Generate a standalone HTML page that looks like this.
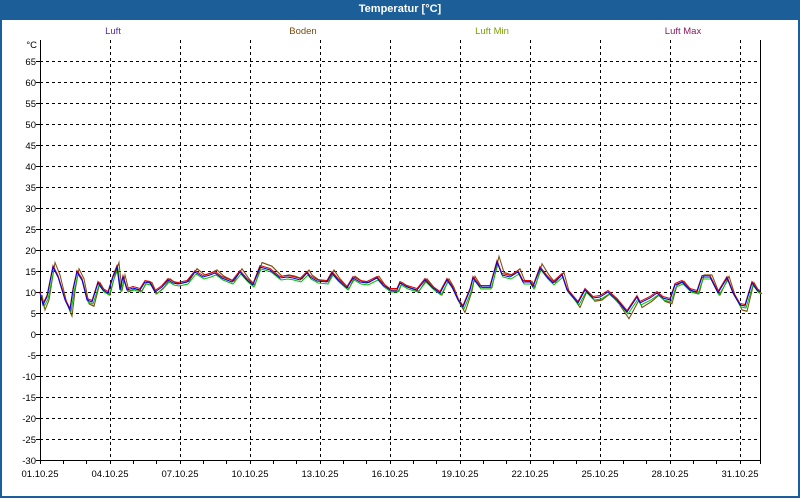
<!DOCTYPE html>
<html><head><meta charset="utf-8"><style>
body{margin:0;width:800px;height:500px;overflow:hidden;background:#fff;font-family:"Liberation Sans","DejaVu Sans",sans-serif}
.frame{position:absolute;left:0;top:0;width:796px;height:496px;border:2px solid #1b5e98;border-top:none;}
.title{position:absolute;left:0;top:0;width:800px;height:20px;background:#1b5e98;color:#fff;font-weight:bold;font-size:11px;text-align:center;line-height:19px}
svg{position:absolute;left:0;top:0}
text{font-family:"Liberation Sans Narrow","Liberation Sans","DejaVu Sans",sans-serif;font-size:9.5px}
</style></head><body>
<div class="frame"></div>
<div class="title">Temperatur [°C]</div>
<svg width="800" height="500">
<g>
<text x="113" y="34" text-anchor="middle" fill="#5a2aa0">Luft</text>
<text x="303" y="34" text-anchor="middle" fill="#7a4a10">Boden</text>
<text x="492" y="34" text-anchor="middle" fill="#7aa000">Luft Min</text>
<text x="683" y="34" text-anchor="middle" fill="#8a1a60">Luft Max</text>
</g>
<g stroke="#000" stroke-dasharray="3,3" stroke-width="1">
<path d="M40 61.5H760M40 82.5H760M40 103.5H760M40 124.5H760M40 145.5H760M40 166.5H760M40 187.5H760M40 208.5H760M40 229.5H760M40 250.5H760M40 271.5H760M40 292.5H760M40 313.5H760M40 334.5H760M40 355.5H760M40 376.5H760M40 397.5H760M40 418.5H760M40 439.5H760"/>
<path d="M110.5 40V460M180.5 40V460M250.5 40V460M320.5 40V460M390.5 40V460M460.5 40V460M530.5 40V460M600.5 40V460M670.5 40V460M740.5 40V460"/>
</g>
<path d="M40.5 40V460.5H760.5V40" stroke="#000" fill="none"/>
<g stroke="#000"><path d="M36 61.5h4M36 82.5h4M36 103.5h4M36 124.5h4M36 145.5h4M36 166.5h4M36 187.5h4M36 208.5h4M36 229.5h4M36 250.5h4M36 271.5h4M36 292.5h4M36 313.5h4M36 334.5h4M36 355.5h4M36 376.5h4M36 397.5h4M36 418.5h4M36 439.5h4M36 460.5h4"/>
<path d="M40.5 460v4M63.5 460v4M86.5 460v4M110.5 460v4M133.5 460v4M156.5 460v4M180.5 460v4M203.5 460v4M226.5 460v4M250.5 460v4M273.5 460v4M296.5 460v4M320.5 460v4M343.5 460v4M366.5 460v4M390.5 460v4M413.5 460v4M436.5 460v4M460.5 460v4M483.5 460v4M506.5 460v4M530.5 460v4M553.5 460v4M576.5 460v4M600.5 460v4M623.5 460v4M646.5 460v4M670.5 460v4M693.5 460v4M716.5 460v4M740.5 460v4M760.5 460v4"/></g>
<g text-anchor="end" fill="#000">
<text x="37" y="48">°C</text>
<text x="36" y="65">65</text><text x="36" y="86">60</text><text x="36" y="107">55</text><text x="36" y="128">50</text><text x="36" y="149">45</text><text x="36" y="170">40</text><text x="36" y="191">35</text><text x="36" y="212">30</text><text x="36" y="233">25</text><text x="36" y="254">20</text><text x="36" y="275">15</text><text x="36" y="296">10</text><text x="36" y="317">5</text><text x="36" y="338">0</text><text x="36" y="359">-5</text><text x="36" y="380">-10</text><text x="36" y="401">-15</text><text x="36" y="422">-20</text><text x="36" y="443">-25</text><text x="36" y="464">-30</text>
</g>
<g text-anchor="middle" fill="#000">
<text x="40" y="477">01.10.25</text><text x="110" y="477">04.10.25</text><text x="180" y="477">07.10.25</text><text x="250" y="477">10.10.25</text><text x="320" y="477">13.10.25</text><text x="390" y="477">16.10.25</text><text x="460" y="477">19.10.25</text><text x="530" y="477">22.10.25</text><text x="600" y="477">25.10.25</text><text x="670" y="477">28.10.25</text><text x="740" y="477">31.10.25</text>
</g>
<defs><path id="s" d="M40 293L43 305L47 297L53 267L58 277L65 300L70 310L73 290L77 272L82 280L87 300L92 302L98 283L103 290L108 293L113 277L117 267L120 290L123 277L127 290L133 288L140 290L145 282L150 283L155 292L162 287L168 280L173 283L178 284L187 282L195 272L203 277L210 275L215 273L222 278L232 282L240 272L247 280L253 285L260 267L270 270L280 278L287 277L293 278L300 280L307 273L310 277L317 281L327 282L332 273L338 280L347 288L353 278L360 282L367 283L377 278L383 285L390 290L397 290L400 283L407 287L417 290L425 280L433 288L440 293L447 280L452 287L458 300L463 307L470 290L473 278L480 287L490 287L497 262L502 275L510 277L518 272L523 282L530 282L533 287L540 268L547 277L553 283L562 275L567 290L578 303L585 290L593 298L600 297L608 292L617 300L627 312L637 297L640 303L650 298L657 293L663 298L670 300L675 285L682 282L690 290L697 292L702 277L710 277L718 293L727 278L733 293L740 305L745 306L752 283L757 290L760 292"/></defs>
<g fill="none" stroke-width="1">
<use href="#s" stroke="#7a5010" transform="translate(2,285) scale(1,1.25) translate(0,-285)"/>
<use href="#s" stroke="#00c000" transform="translate(1,2)"/>
<use href="#s" stroke="#e00000" transform="translate(0,-1.5)"/>
<use href="#s" stroke="#0000e0"/>
</g>
</svg>
</body></html>
